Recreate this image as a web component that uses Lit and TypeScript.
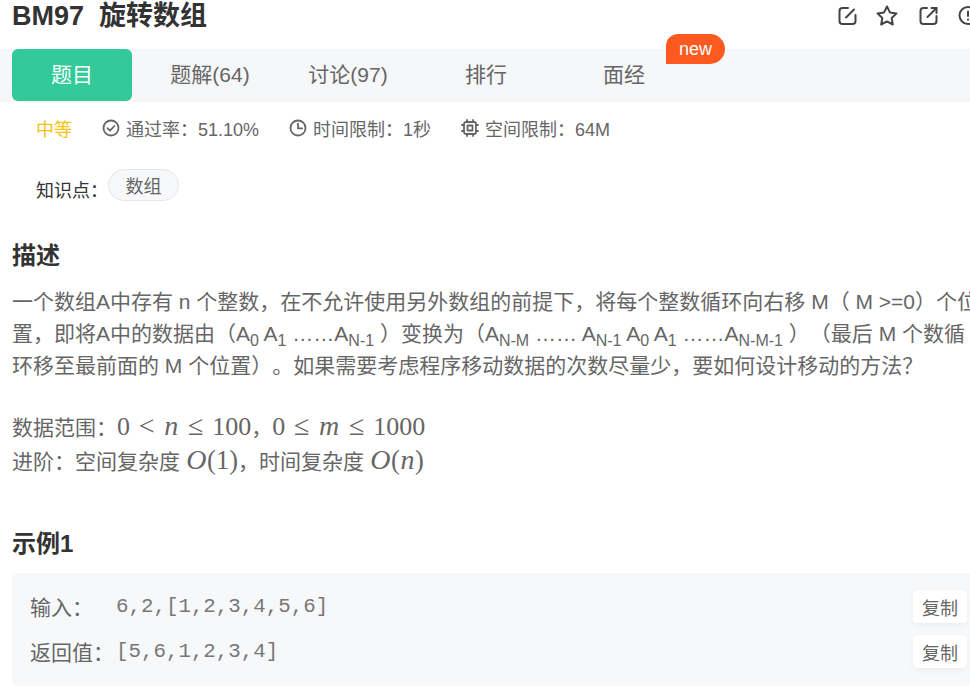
import { LitElement, html, css } from "lit";
import { customElement } from "lit/decorators.js";

@customElement("app-root")
export class AppRoot extends LitElement {
  static styles = css`
    :host { display: block; width: 970px; height: 688px; overflow: hidden; background: #fff; font-family: "Liberation Sans", "Noto Sans CJK SC", sans-serif; color: #666; text-spacing-trim: space-all; }
    .page { width: 980px; }
    .header { height: 49px; display: flex; align-items: flex-start; justify-content: space-between; padding-left: 12px; box-sizing: border-box; }
    .title { margin: 0; font-size: 27px; line-height: 32px; font-weight: 700; color: #333; white-space: pre; }
    .actions { display: flex; gap: 16.5px; padding-top: 4px; }
    .actions svg { width: 24px; height: 24px; display: block; fill: none; stroke: #444; stroke-width: 2; stroke-linecap: round; stroke-linejoin: round; }
    .tabs { position: relative; display: flex; gap: 18px; height: 53px; padding-left: 12px; background: #f6f7f9; box-sizing: border-box; border-bottom: 1px solid #f3f4f6; }
    .tab { width: 120px; height: 52px; padding-bottom: 4px; box-sizing: border-box; display: flex; align-items: center; justify-content: center; font-size: 21px; color: #666; border-radius: 6px; }
    .tab.active { background: #32ca99; color: #fff; }
    .badge { position: absolute; left: 666px; top: -15px; width: 59px; height: 30px; display: flex; align-items: center; justify-content: center; background: #fe5a1f; color: #fff; font-size: 18px; border-radius: 12px 15px 15px 0; }
    .meta { display: flex; align-items: center; height: 54px; padding: 0 0 3px 36px; box-sizing: border-box; font-size: 18px; color: #666; white-space: nowrap; }
    .level { font-size: 18px; color: #f5c211; margin-right: 30px; }
    .meta-item { display: flex; align-items: center; gap: 6px; margin-right: 30px; }
    .meta-item svg { width: 18px; height: 18px; fill: none; stroke: #666; stroke-width: 1.8; stroke-linecap: round; stroke-linejoin: round; }
    .topics { display: flex; align-items: center; height: 32px; margin-top: 13px; padding-left: 36px; font-size: 18px; color: #333; }
    .topics span.label { position: relative; top: 4px; width: 72px; white-space: nowrap; }
    .tag { width: 71px; height: 32px; box-sizing: border-box; display: flex; align-items: center; justify-content: center; border: 1px solid #e4e6eb; border-radius: 16px; background: #f7f8fa; color: #666; }
    h2 { margin: 0; padding-left: 12px; font-size: 24px; font-weight: 700; line-height: 32px; color: #333; }
    .desc-head { margin-top: 39px; }
    .desc { margin: 14px 0 0; padding-left: 12px; font-size: 21px; line-height: 32px; color: #666; white-space: nowrap; }
    sub { font-size: 16px; line-height: 0; vertical-align: -5px; }
    .math { font-family: "Liberation Serif", serif; font-size: 26px; color: #666; }
    .math.big { font-size: 26.5px; }
    .math i { font-style: italic; font-size: 28px; margin: 0 1px; }
    .math.big i { margin: 0 .5px; }
    .rel { font-size: 28px; margin: 0 8.75px; }
    .data { margin: 28px 0 0; padding-left: 12px; font-size: 21px; line-height: 32px; white-space: nowrap; }
    .example-head { margin-top: 50px; }
    .box { margin: 13px 0 0 12px; height: 113px; padding: 17px 13px 0 18px; box-sizing: border-box; background: #f7f8fa; border-radius: 6px 0 0 6px; display: flex; flex-direction: column; gap: 12px; width: 958px; }
    .row { display: flex; align-items: center; height: 33px; font-size: 21px; color: #666; }
    .row .key { width: 86px; white-space: nowrap; padding-bottom: 2px; }
    code { font-family: "Liberation Mono", monospace; font-size: 20.8px; flex: 1; color: #777; }
    .copy { width: 54px; height: 33px; display: flex; align-items: center; justify-content: center; background: #fff; border-radius: 4px; box-shadow: 0 2px 6px rgba(0,0,0,.05); font-size: 18px; color: #666; margin-right: -10px; }
  `;

  render() {
    return html`<div class="page">
      <div class="header">
        <h1 class="title">BM97  旋转数组</h1>
        <div class="actions">
          <svg viewBox="0 0 24 24"><path d="M13 4H7.5a3 3 0 0 0-3 3v10a3 3 0 0 0 3 3h10a3 3 0 0 0 3-3v-6"/><path d="M11 13.5 19 5.5"/></svg>
          <svg viewBox="0 0 24 24"><path d="M12 2.5l2.9 5.9 6.6 1-4.8 4.6 1.1 6.5-5.8-3.1-5.8 3.1 1.1-6.5-4.8-4.6 6.6-1z"/></svg>
          <svg viewBox="0 0 24 24"><path d="M11 4H7.5a3 3 0 0 0-3 3v10a3 3 0 0 0 3 3h10a3 3 0 0 0 3-3v-5"/><path d="M11.5 13 20.5 4"/><path d="M15.5 4h5v5"/></svg>
          <svg viewBox="0 0 24 24"><circle cx="12" cy="11.5" r="8.5"/><path d="M12 7.5v4.5"/><path d="M12 15.5v.2"/></svg>
        </div>
      </div>
      <div class="tabs">
        <div class="tab active">题目</div>
        <div class="tab">题解(64)</div>
        <div class="tab">讨论(97)</div>
        <div class="tab">排行</div>
        <div class="tab">面经</div>
        <div class="badge">new</div>
      </div>
      <div class="meta">
        <span class="level">中等</span>
        <span class="meta-item"><svg viewBox="0 0 18 18"><circle cx="9" cy="9" r="7.5"/><path d="M5.6 9.2l2.4 2.4 4.4-4.6"/></svg>通过率：51.10%</span>
        <span class="meta-item"><svg viewBox="0 0 18 18"><circle cx="9" cy="9" r="7.5"/><path d="M9 4.6V9.4h4.2"/></svg>时间限制：1秒</span>
        <span class="meta-item"><svg viewBox="0 0 18 18"><rect x="3" y="3" width="12" height="12" rx="2"/><rect x="6.5" y="6.5" width="5" height="5"/><path d="M6 1v2M12 1v2M6 15v2M12 15v2M1 6h2M1 12h2M15 6h2M15 12h2"/></svg>空间限制：64M</span>
      </div>
      <div class="topics"><span class="label">知识点：</span><span class="tag">数组</span></div>
      <h2 class="desc-head">描述</h2>
      <p class="desc">一个数组A中存有 n 个整数，在不允许使用另外数组的前提下，将每个整数循环向右移 M（ M &gt;=0）个位<br />置，即将A中的数据由（A<sub>0</sub> A<sub>1</sub> ……A<sub>N-1</sub> ）变换为（A<sub>N-M</sub> …… A<sub>N-1</sub> A<sub>0</sub> A<sub>1</sub> ……A<sub>N-M-1</sub> ）（最后 M 个数循<br />环移至最前面的 M 个位置）。如果需要考虑程序移动数据的次数尽量少，要如何设计移动的方法？</p>
      <p class="data">数据范围：<span class="math">0<span class="rel">&lt;</span><i>n</i><span class="rel">≤</span>100</span>，<span class="math">0<span class="rel">≤</span><i>m</i><span class="rel">≤</span>1000</span><br />进阶：空间复杂度 <span class="math big"><i>O</i>(1)</span>，时间复杂度 <span class="math big"><i>O</i>(<i>n</i>)</span></p>
      <h2 class="example-head">示例1</h2>
      <div class="box">
        <div class="row"><span class="key">输入：</span><code>6,2,[1,2,3,4,5,6]</code><span class="copy">复制</span></div>
        <div class="row"><span class="key">返回值：</span><code>[5,6,1,2,3,4]</code><span class="copy">复制</span></div>
      </div>
    </div>`;
  }
}
